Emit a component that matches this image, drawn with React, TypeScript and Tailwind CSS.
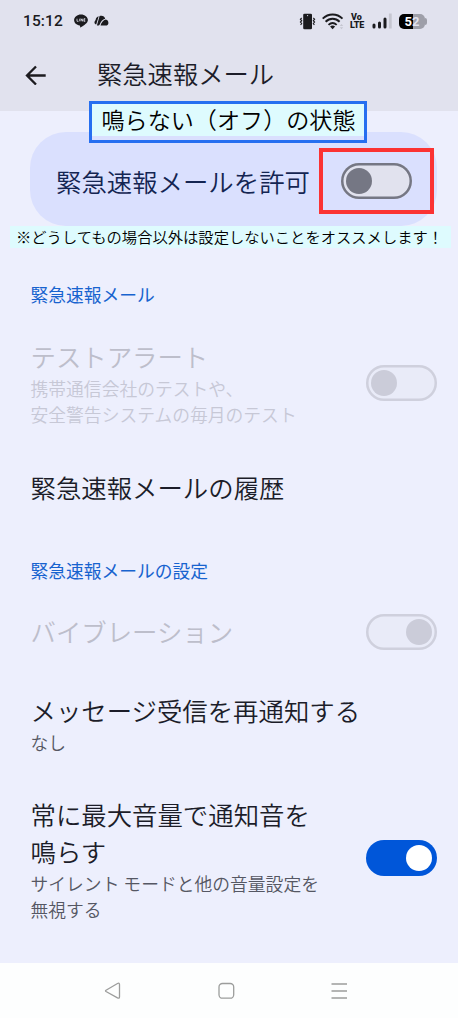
import clsx from 'clsx';
import type { ReactNode } from 'react';

type SwitchState = 'off' | 'on' | 'disabled-off' | 'disabled-on';

function Switch({ state }: { state: SwitchState }) {
    return (
        <div
            className={clsx(
                'flex h-[36px] w-[71px] shrink-0 items-center rounded-full px-[5px]',
                state === 'off' && 'bg-[#e1e2ee] shadow-[inset_0_0_0_2.5px_#757784]',
                state === 'on' && 'mb-[2px] justify-end bg-[#0056d9]',
                state.startsWith('disabled') && 'bg-[#e9ebf8] shadow-[inset_0_0_0_2.5px_#cfd0dd]',
                state === 'disabled-on' && 'justify-end',
            )}
        >
            <div
                className={clsx(
                    'size-[26px] rounded-full',
                    state === 'off' && 'bg-[#757784]',
                    state === 'on' && 'bg-white',
                    state.startsWith('disabled') && 'bg-[#cbccd9]',
                )}
            />
        </div>
    );
}

function StatusBar() {
    return (
        <div className="flex h-[42px] items-center pl-[23px] text-[#1b1b1e]">
            <span className="w-[51px] pt-px font-[Roboto] text-[15.5px] font-medium tracking-[0.1px]">
                15:12
            </span>
            <svg width="14" height="14" viewBox="0 0 14 14">
                <path
                    d="M7 .4C3.2.4.1 2.9.1 6c0 2.9 2.4 5 5.6 5.5.5.1.5.5.4 1.4-.1.7.5.6 1.100.2C9.800 11.600 13.900 9 13.900 6 13.900 2.900 10.800.4 7 .4Z"
                    fill="currentColor"
                />
                <path
                    d="M3 4.700v2.600h1.500M5.700 4.700v2.600M7 7.300V4.700l1.700 2.600V4.700M11.300 4.700H10v2.600h1.300M10 6h1.200"
                    fill="none"
                    stroke="#e1e2ee"
                    strokeWidth=".8"
                />
            </svg>
            <svg className="ml-[6px]" width="15" height="12" viewBox="0 0 15 12">
                <path
                    d="M1.500 9.300C.1 8.300.1 6.400 1.600 4.900 1.900 3 3.100 1.700 4.700 1.300L2.200 9.600ZM2.900 10.500 5.600 1.100C8 0 10.600 1.200 11.200 3.700 8.600 4.300 6.500 6.800 5.900 9 5.500 10.300 4.500 10.800 2.900 10.500ZM6.500 10.600C7.200 7.500 9.200 5.200 11.800 4.500c1.800.4 2.800 2 2.600 3.800-.2 1.500-1.200 2.300-2.600 2.300Z"
                    fill="currentColor"
                />
            </svg>

            <svg className="ml-[190px]" width="17" height="17" viewBox="0 0 17 17">
                <rect x="4.200" y=".7" width="8.800" height="15.600" rx="1.300" fill="currentColor" />
                <circle cx="8.600" cy="2.600" r=".6" fill="#e1e2ee" />
                <path
                    d="M2.700 5 1.400 6.200l1.300 1.500-1.300 1.400 1.300 1.400L1.600 12M14.300 5l1.300 1.200-1.300 1.500 1.300 1.400-1.300 1.400 1.100 1.500"
                    fill="none"
                    stroke="currentColor"
                    strokeWidth="1.100"
                />
            </svg>
            <svg className="ml-[6px]" width="22" height="17" viewBox="0 0 22 17">
                <path
                    d="M.7 5.600c5.700-5.400 14.100-5.400 19.800 0M3.600 8.800c4.100-4 9.900-4 14 0M6.500 11.900c2.500-2.300 5.700-2.300 8.200 0"
                    fill="none"
                    stroke="currentColor"
                    strokeWidth="1.900"
                />
                <path d="M8.100 13.500c1.400-1.300 3.600-1.300 5 0l-2.500 2.700Z" fill="currentColor" />
                <path d="M17.800 13 19.500 11l1.700 2ZM17.800 14.300l1.700 2 1.700-2Z" fill="#c5c6d0" />
            </svg>
            <div className="ml-[6px] w-[16px] font-[Roboto] text-[9px] leading-[8px] font-black">
                <div className="pl-px">Vo</div>
                <div className="tracking-[-0.2px]">LTE</div>
            </div>
            <svg className="ml-[6px]" width="20" height="16" viewBox="0 0 20 16">
                <path
                    d="M2 12v2M7.500 10v4M13 6v8"
                    stroke="currentColor"
                    strokeWidth="3"
                    strokeLinecap="round"
                />
                <path d="M18.300.5v15" stroke="#c5c6d0" strokeWidth="2.800" />
            </svg>
            <div className="ml-[7px] flex items-center">
                <div className="flex h-[15px] w-[26px] items-center justify-center rounded-[5px] bg-linear-to-r from-black from-55% to-[#9e9fa9] to-55% pt-px font-[Roboto] text-[13px] font-bold text-white">
                    <span>5</span>
                    <span className="text-[#e1e2ee]">2</span>
                </div>
                <div className="h-[7px] w-[2px] rounded-r-full bg-[#9e9fa9]" />
            </div>
        </div>
    );
}

function SectionTitle({ children }: { children: ReactNode }) {
    return (
        <h2 className="text-[17.750px] leading-[26px] font-normal text-[#1763cf]">{children}</h2>
    );
}

interface RowProps {
    title: ReactNode;
    description?: ReactNode;
    state?: SwitchState;
    className?: string;
}

function Row({ title, description, state, className }: RowProps) {
    const disabled = state?.startsWith('disabled');

    return (
        <div className={clsx('flex items-center justify-between', className)}>
            <div className="whitespace-nowrap">
                <p
                    className={clsx(
                        'text-[25.400px] leading-[37px]',
                        disabled ? 'text-[#bdbecb]' : 'text-[#1c1d29]',
                    )}
                >
                    {title}
                </p>
                {description && (
                    <p
                        className={clsx(
                            'text-[17.800px] leading-[26px]',
                            disabled ? 'text-[#c7c8d6]' : 'text-[#555763]',
                        )}
                    >
                        {description}
                    </p>
                )}
            </div>
            {state && <Switch state={state} />}
        </div>
    );
}

function NavigationBar() {
    return (
        <nav className="flex h-[55px] items-start bg-[#fdfefe] pt-[18.500px] pl-[104px]">
            <svg width="250" height="18" fill="none" stroke="#9c9d9c" strokeWidth="1.300">
                <path
                    d="M2 8.200 13.500 1.500Q15.500.6 15.500 2.500v12.300q0 2-2 1.100L2 9.500q-1-.7 0-1.300Z"
                    strokeLinejoin="round"
                />
                <rect x="115" y="1.500" width="14.700" height="14.700" rx="3.500" />
                <path d="M227.500 2h15.500M227.500 9h15.500M227.500 16h15.500" />
            </svg>
        </nav>
    );
}

export default function App() {
    return (
        <div className="h-[1024px] w-[460px] overflow-hidden bg-white font-['Noto_Sans_CJK_JP',sans-serif] font-[350]">
            <div className="relative w-[458px] bg-[#edeffd]">
                <header className="h-[111px] bg-[#e1e2ee]">
                    <StatusBar />
                    <div className="flex h-[66px] items-center pl-[25px]">
                        <svg width="22" height="20" viewBox="0 0 22 20">
                            <path
                                d="M20.700 10.500H2.500M11 1.500 2 10.500l9 9"
                                fill="none"
                                stroke="#1c1b1f"
                                strokeWidth="2.300"
                            />
                        </svg>
                        <h1 className="ml-[50px] pb-[2px] text-[25.300px] font-[350] text-[#1c1d29]">
                            緊急速報メール
                        </h1>
                    </div>
                </header>

                <div className="mx-[30px] mt-[21px] flex h-[94px] w-[407px] items-center rounded-[36px] bg-[#dae0fe] pt-[4px] pl-[26px]">
                    <p className="w-[285px] text-[25.400px] whitespace-nowrap text-[#142552]">
                        緊急速報メールを許可
                    </p>
                    <Switch state="off" />
                </div>

                <main className="h-[737px] pt-[55px] pr-[21px] pl-[30.500px]">
                    <SectionTitle>緊急速報メール</SectionTitle>
                    <Row
                        className="mt-[31px]"
                        title="テストアラート"
                        description={
                            <>
                                携帯通信会社のテストや、
                                <br />
                                安全警告システムの毎月のテスト
                            </>
                        }
                        state="disabled-off"
                    />
                    <Row className="mt-[42px]" title="緊急速報メールの履歴" />
                    <div className="mt-[51px]">
                        <SectionTitle>緊急速報メールの設定</SectionTitle>
                    </div>
                    <Row className="mt-[30px]" title="バイブレーション" state="disabled-on" />
                    <Row className="mt-[42px]" title="メッセージ受信を再通知する" description="なし" />
                    <Row
                        className="mt-[41px]"
                        title={
                            <>
                                常に最大音量で通知音を
                                <br />
                                鳴らす
                            </>
                        }
                        description={
                            <>
                                サイレント モードと他の音量設定を
                                <br />
                                無視する
                            </>
                        }
                        state="on"
                    />
                </main>

                {/* Callouts over the screen */}
                <div className="absolute top-[101px] left-[89px] h-[42px] w-[278px] border-[3px] border-[#266ff0] bg-[#dae0fe]">
                    <p className="h-[32px] bg-[#defbfe] pl-px text-center text-[23.100px] leading-[31px] whitespace-nowrap text-black">
                        鳴らない（オフ）の状態
                    </p>
                </div>
                <div className="absolute top-[148px] left-[319px] h-[66px] w-[115px] border-4 border-[#fb3333]" />
                <p className="absolute top-[226px] left-[10px] h-[22px] w-[441px] bg-[#defbfe] pl-[6px] text-[15.300px] leading-[21px] whitespace-nowrap text-black">
                    ※どうしてもの場合以外は設定しないことをオススメします！
                </p>
            </div>
            <div className="w-[458px]">
                <NavigationBar />
            </div>
        </div>
    );
}
